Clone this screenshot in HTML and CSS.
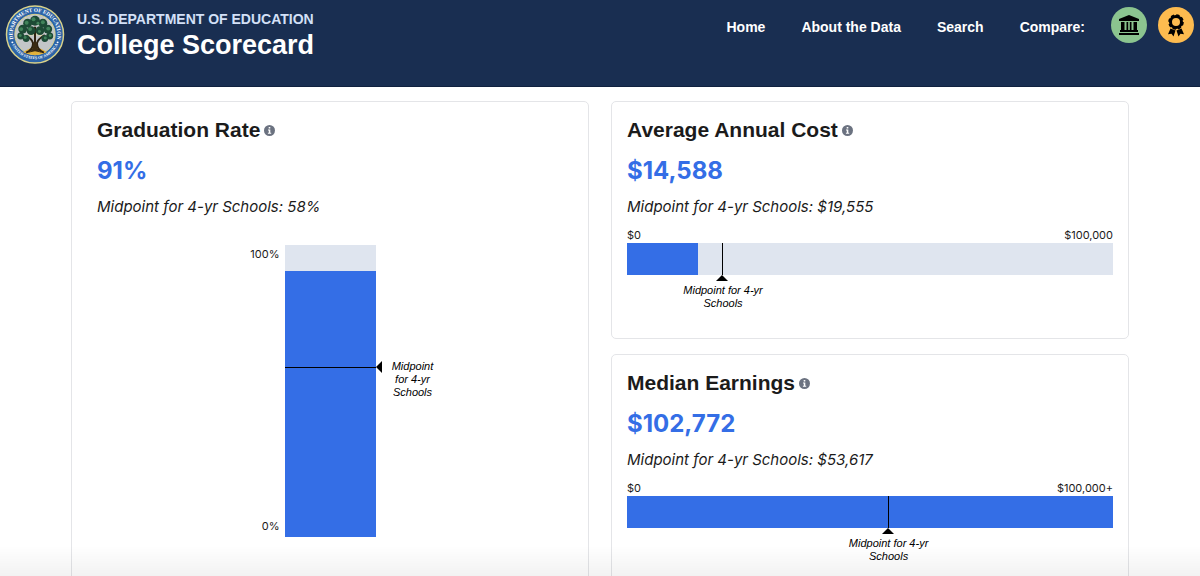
FILE: index.html
```html
<!DOCTYPE html>
<html lang="en">
<head>
    <meta charset="utf-8">
    <title>College Scorecard</title>
    <meta name="viewport" content="width=device-width, initial-scale=1.0">
    <link rel="stylesheet" href="styles.css">
</head>
<body>
    <header class="site-header">
        <a class="brand" href="#">
            <svg class="seal" viewBox="0 0 120 120" aria-hidden="true">
                <defs>
                    <path id="seal-top" d="M15 66 A45.5 45.5 0 1 1 105 66"/>
                    <path id="seal-bottom" d="M11 72 A50.5 50.5 0 0 0 109 72"/>
                </defs>
                <circle cx="60" cy="60" r="58" fill="#2c64a8" stroke="#d9d28a" stroke-width="3"/>
                <circle cx="60" cy="60" r="41" fill="#c3c6c8" stroke="#d9d28a" stroke-width="2"/>
                <path d="M60 60 L24 41 M60 60 L40 24 M60 60 L80 24 M60 60 L96 41 M60 60 L99 66 M60 60 L21 66" stroke="#e0d9a8" stroke-width="2"/>
                <path d="M36 96 Q60 78 84 96 Q60 108 36 96Z" fill="#e2b13c"/>
                <path d="M42 97 Q56 92 56 78 Q54 69 42 62 M78 97 Q64 92 64 78 Q66 69 80 61 M60 92 V44" fill="none" stroke="#2d2110" stroke-width="4"/>
                <path d="M56 76 H64 L65 88 Q67 94 74 97 L60 94 L46 97 Q53 94 55 88Z" fill="#3a2a12"/>
                <g fill="#1d4a35">
                    <circle cx="60" cy="32" r="10"/>
                    <circle cx="45" cy="37" r="9"/>
                    <circle cx="76" cy="37" r="9"/>
                    <circle cx="35" cy="49" r="9"/>
                    <circle cx="86" cy="49" r="9"/>
                    <circle cx="31" cy="63" r="7"/>
                    <circle cx="90" cy="63" r="7"/>
                    <circle cx="42" cy="68" r="7"/>
                    <circle cx="80" cy="68" r="7"/>
                    <circle cx="52" cy="52" r="9"/>
                    <circle cx="70" cy="52" r="9"/>
                </g>
                <g fill="#41835a">
                    <circle cx="57" cy="29" r="4"/>
                    <circle cx="66" cy="37" r="3"/>
                    <circle cx="43" cy="36" r="4"/>
                    <circle cx="76" cy="35" r="4"/>
                    <circle cx="32" cy="49" r="4"/>
                    <circle cx="50" cy="49" r="4"/>
                    <circle cx="87" cy="48" r="4"/>
                    <circle cx="69" cy="54" r="3"/>
                    <circle cx="40" cy="66" r="3"/>
                    <circle cx="81" cy="67" r="3"/>
                    <circle cx="91" cy="62" r="3"/>
                    <circle cx="30" cy="62" r="3"/>
                </g>
                <circle cx="14" cy="76" r="2" fill="#fff"/>
                <circle cx="106" cy="76" r="2" fill="#fff"/>
                <text class="seal-text"><textPath href="#seal-top" startOffset="50%">DEPARTMENT OF EDUCATION</textPath></text>
                <text class="seal-text seal-text-small"><textPath href="#seal-bottom" startOffset="50%">UNITED STATES OF AMERICA</textPath></text>
            </svg>
            <span class="brand-text">
                <span class="brand-dept">U.S. DEPARTMENT OF EDUCATION</span>
                <span class="brand-name">College Scorecard</span>
            </span>
        </a>
        <nav class="site-nav">
            <a class="nav-item" href="#">Home</a>
            <a class="nav-item" href="#">About the Data</a>
            <a class="nav-item" href="#">Search</a>
            <span class="nav-item">Compare:</span>
            <div class="compare">
                <button class="compare-btn compare-schools" type="button" aria-label="Compare schools">
                    <svg width="20" height="20" viewBox="0 0 20 20" aria-hidden="true">
                        <path d="M10 0 L20 4 V6 H0 V4Z M2 7 H5.500 V15 H7.500 V7 H9.200 V15 H10.800 V7 H12.500 V15 H14.500 V7 H18 V15 H19 V17 H1 V15 H2Z M0 18 H20 V20 H0Z"/>
                    </svg>
                </button>
                <button class="compare-btn compare-fields" type="button" aria-label="Compare fields of study">
                    <svg width="18" height="23" viewBox="0 0 18 23" aria-hidden="true">
                        <circle cx="9" cy="8" r="5.500" fill="none" stroke="#000" stroke-width="3"/>
                        <circle cx="9" cy="8" r="7" fill="none" stroke="#000" stroke-width="1.600" stroke-dasharray="3.400 2.100"/>
                        <path d="M3.500 14.500 L8.500 16.500 L6.500 22.500 L4.500 19.800 L1 20.300Z M14.500 14.500 L9.500 16.500 L11.500 22.500 L13.500 19.800 L17 20.300Z"/>
                    </svg>
                </button>
            </div>
        </nav>
    </header>

    <main class="metrics">
        <section class="card card-wide-pad">
            <h2>Graduation Rate
                <button class="info" type="button" aria-label="About graduation rate">
                    <svg width="11" height="11" viewBox="0 0 11 11" aria-hidden="true">
                        <circle cx="5.500" cy="5.500" r="5.500" fill="#6b7280"/>
                        <path d="M4.700 2 H6.300 V3.500 H4.700Z M4 4.500 H6.300 V7.800 H7.200 V8.800 H3.900 V7.800 H4.800 V5.500 H4Z" fill="#fff"/>
                    </svg>
                </button>
            </h2>
            <p class="value">91%</p>
            <p class="midpoint">Midpoint for 4-yr Schools: 58%</p>
            <div class="vchart">
                <div class="vscale">
                    <span>100%</span>
                    <span>0%</span>
                </div>
                <div class="vbar">
                    <div class="vfill" style="height: 91%"></div>
                    <div class="vmark" style="bottom: 58%">
                        <span class="vmark-label">Midpoint for 4-yr Schools</span>
                    </div>
                </div>
            </div>
        </section>

        <div class="column">
            <section class="card">
                <h2>Average Annual Cost
                    <button class="info" type="button" aria-label="About average annual cost">
                        <svg width="11" height="11" viewBox="0 0 11 11" aria-hidden="true">
                            <circle cx="5.500" cy="5.500" r="5.500" fill="#6b7280"/>
                            <path d="M4.700 2 H6.300 V3.500 H4.700Z M4 4.500 H6.300 V7.800 H7.200 V8.800 H3.900 V7.800 H4.800 V5.500 H4Z" fill="#fff"/>
                        </svg>
                    </button>
                </h2>
                <p class="value">$14,588</p>
                <p class="midpoint">Midpoint for 4-yr Schools: $19,555</p>
                <div class="hscale">
                    <span>$0</span>
                    <span>$100,000</span>
                </div>
                <div class="hbar">
                    <div class="hfill" style="width: 14.588%"></div>
                    <div class="hmark" style="left: 19.555%">
                        <span class="hmark-label">Midpoint for 4-yr Schools</span>
                    </div>
                </div>
            </section>

            <section class="card">
                <h2>Median Earnings
                    <button class="info" type="button" aria-label="About median earnings">
                        <svg width="11" height="11" viewBox="0 0 11 11" aria-hidden="true">
                            <circle cx="5.500" cy="5.500" r="5.500" fill="#6b7280"/>
                            <path d="M4.700 2 H6.300 V3.500 H4.700Z M4 4.500 H6.300 V7.800 H7.200 V8.800 H3.900 V7.800 H4.800 V5.500 H4Z" fill="#fff"/>
                        </svg>
                    </button>
                </h2>
                <p class="value">$102,772</p>
                <p class="midpoint">Midpoint for 4-yr Schools: $53,617</p>
                <div class="hscale">
                    <span>$0</span>
                    <span>$100,000+</span>
                </div>
                <div class="hbar">
                    <div class="hfill" style="width: 100%"></div>
                    <div class="hmark" style="left: 53.617%">
                        <span class="hmark-label">Midpoint for 4-yr Schools</span>
                    </div>
                </div>
            </section>
        </div>
    </main>
    <div class="bottom-fade"></div>
</body>
</html>
```

FILE: styles.css
```css
* {
    box-sizing: border-box;
}

body {
    display: flex;
    flex-direction: column;
    height: 100vh;
    margin: 0;
    overflow: hidden;
    background-color: #fff;
    color: #1b1b1b;
    font-family: Inter, sans-serif;
}

h2,
p {
    margin: 0;
}

button {
    display: flex;
    align-items: center;
    justify-content: center;
    padding: 0;
    border: 0;
    background: none;
    cursor: pointer;
}

/* header */
.site-header {
    display: flex;
    flex-shrink: 0;
    justify-content: space-between;
    align-items: flex-start;
    padding: 5px 6px 22px 5px;
    background-color: #192e51;
    border-bottom: 1px solid #10213f;
    color: #fff;
}

.brand {
    display: flex;
    gap: 12px;
    color: #fff;
    text-decoration: none;
}

.seal {
    width: 60px;
    height: 59px;
}

.seal-text {
    fill: #fff;
    font-family: "Liberation Serif", serif;
    font-size: 11px;
    font-weight: bold;
    text-anchor: middle;
}

.seal-text-small {
    font-size: 8px;
}

.brand-text {
    display: flex;
    flex-direction: column;
    padding-top: 5px;
    font-family: "Liberation Sans", Arial, sans-serif;
    font-weight: bold;
}

.brand-dept {
    color: #d3e0f7;
    font-size: 14px;
    line-height: 18px;
}

.brand-name {
    font-size: 27px;
    line-height: 34px;
}

.site-nav {
    display: flex;
    align-items: center;
    gap: 36px;
    padding-top: 2px;
    font-family: "Liberation Sans", Arial, sans-serif;
    font-size: 14px;
    font-weight: bold;
}

.nav-item {
    padding-top: 4px;
    color: #fff;
    text-decoration: none;
}

.compare {
    display: flex;
    gap: 11px;
    margin-left: -10px;
}

.compare-btn {
    width: 36px;
    height: 36px;
    border-radius: 50%;
}

.compare-schools {
    background-color: #8bc48f;
}

.compare-fields {
    background-color: #fdbb4f;
}

/* cards */
.metrics {
    display: grid;
    flex: 1;
    grid-template-columns: 1fr 1fr;
    gap: 22px;
    width: 100%;
    max-width: 1090px;
    margin: 0 auto;
    padding: 14px 16px;
}

.column {
    display: flex;
    flex-direction: column;
    gap: 15px;
}

.card {
    padding: 16px 15px 63px;
    border: 1px solid #e4e5e8;
    border-radius: 5px;
}

.card-wide-pad {
    padding: 16px 25px 63px;
}

.card h2 {
    display: flex;
    align-items: center;
    gap: 4px;
    font-family: "Liberation Sans", Arial, sans-serif;
    font-size: 21px;
    line-height: 24px;
}

.value {
    margin-top: 15px;
    color: #346ee6;
    font-size: 24px;
    font-weight: bold;
    line-height: 28px;
}

.midpoint {
    margin-top: 12px;
    font-size: 15px;
    font-style: italic;
    line-height: 20px;
}

/* horizontal charts */
.hscale {
    display: flex;
    justify-content: space-between;
    margin-top: 11px;
    font-size: 11px;
    line-height: 14px;
}

.hbar {
    position: relative;
    height: 32px;
    margin-top: 1px;
    background-color: #dfe5ef;
}

.hfill {
    height: 100%;
    background-color: #346ee6;
}

.hmark {
    position: absolute;
    top: 0;
    bottom: 0;
    border-left: 1px solid #000;
}

.hmark::after {
    content: "";
    position: absolute;
    top: 100%;
    left: -7px;
    border: 6px solid transparent;
    border-top: 0;
    border-bottom-color: #000;
}

.hmark-label,
.vmark-label {
    position: absolute;
    color: #000;
    font-family: "Liberation Sans", Arial, sans-serif;
    font-size: 11px;
    font-style: italic;
    line-height: 13px;
    text-align: center;
}

.hmark-label {
    top: 41px;
    left: -50px;
    width: 100px;
}

/* vertical chart */
.vchart {
    display: grid;
    grid-template-columns: 1fr 91px 1fr;
    height: 292px;
    margin-top: 28px;
}

.vscale {
    display: flex;
    flex-direction: column;
    justify-content: space-between;
    padding: 2px 5px 4px;
    font-size: 11px;
    line-height: 14px;
    text-align: right;
}

.vbar {
    position: relative;
    display: flex;
    align-items: flex-end;
    background-color: #dfe5ef;
}

.vfill {
    width: 100%;
    background-color: #346ee6;
}

.vmark {
    position: absolute;
    left: 0;
    right: 0;
    border-top: 1px solid #000;
}

.vmark::after {
    content: "";
    position: absolute;
    top: -7px;
    left: 100%;
    border: 6px solid transparent;
    border-left: 0;
    border-right-color: #000;
}

.vmark-label {
    top: -8px;
    left: 105px;
    width: 46px;
}

.bottom-fade {
    position: fixed;
    right: 0;
    bottom: 0;
    left: 0;
    height: 30px;
    background: linear-gradient(rgba(0, 0, 0, 0), rgba(0, 0, 0, 0.05));
    pointer-events: none;
}
```
